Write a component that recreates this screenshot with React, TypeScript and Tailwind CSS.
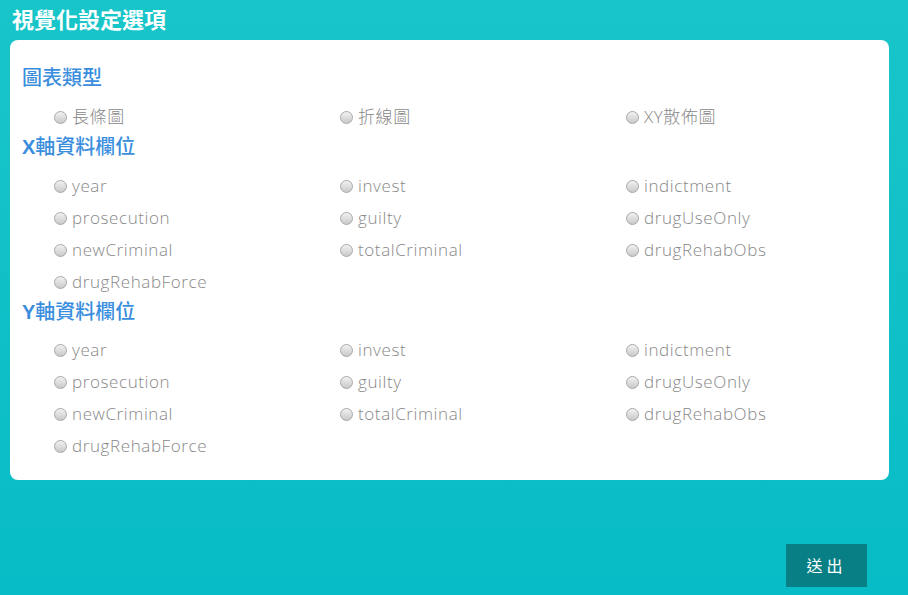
const fields = [
  "year",
  "invest",
  "indictment",
  "prosecution",
  "guilty",
  "drugUseOnly",
  "newCriminal",
  "totalCriminal",
  "drugRehabObs",
  "drugRehabForce",
];

const chartTypes = ["長條圖", "折線圖", "XY散佈圖"];

function Radio({ label }: { label: string }) {
  return (
    <label className="flex h-[32px] items-center gap-[5px] text-[17px] font-light tracking-[0.6px] text-[#888]">
      <span className="h-[13px] w-[13px] rounded-full border border-[#a8a8a8] bg-gradient-to-b from-[#f2f2f2] to-[#c9c9c9]" />
      <span>{label}</span>
    </label>
  );
}

function Section({
  axis,
  title,
  options,
  mb,
}: {
  axis?: string;
  title: string;
  options: string[];
  mb: string;
}) {
  return (
    <div>
      <h2
        className={`pl-[12px] text-[20px] font-medium leading-[28px] text-[#3a8edd] ${mb}`}
        style={{ fontFamily: '"Liberation Sans", "Noto Sans CJK TC", sans-serif' }}
      >
        {axis && <span className="font-bold">{axis}</span>}
        {title}
      </h2>
      <div className="grid grid-cols-[286px_286px_286px] pl-[44px]">
        {options.map((o) => (
          <Radio key={o} label={o} />
        ))}
      </div>
    </div>
  );
}

export default function App() {
  return (
    <main
      className="flex h-[595px] w-[908px] flex-col bg-gradient-to-b from-[#18c5c9] to-[#07bcc6]"
      style={{ fontFamily: '"Open Sans", "Noto Sans CJK TC", sans-serif' }}
    >
      <h1
        className="flex h-[40px] items-center pl-[12px] text-[22px] font-semibold text-white"
        style={{ fontFamily: '"Liberation Serif", "Noto Sans CJK TC", serif' }}
      >
        視覺化設定選項
      </h1>
      <section className="mx-[10px] w-[879px] rounded-[8px] bg-white pb-[18px] pt-[24px]">
        <Section title="圖表類型" options={chartTypes} mb="mb-[9px]" />
        <Section axis="X" title="軸資料欄位" options={fields} mb="mb-[9px]" />
        <Section axis="Y" title="軸資料欄位" options={fields} mb="mb-[8px]" />
      </section>
      <div className="mt-[64px] flex justify-end pr-[41px]">
        <button className="h-[43px] w-[81px] bg-[#087f85] text-[16px] tracking-[4px] text-white">
          送出
        </button>
      </div>
    </main>
  );
}
